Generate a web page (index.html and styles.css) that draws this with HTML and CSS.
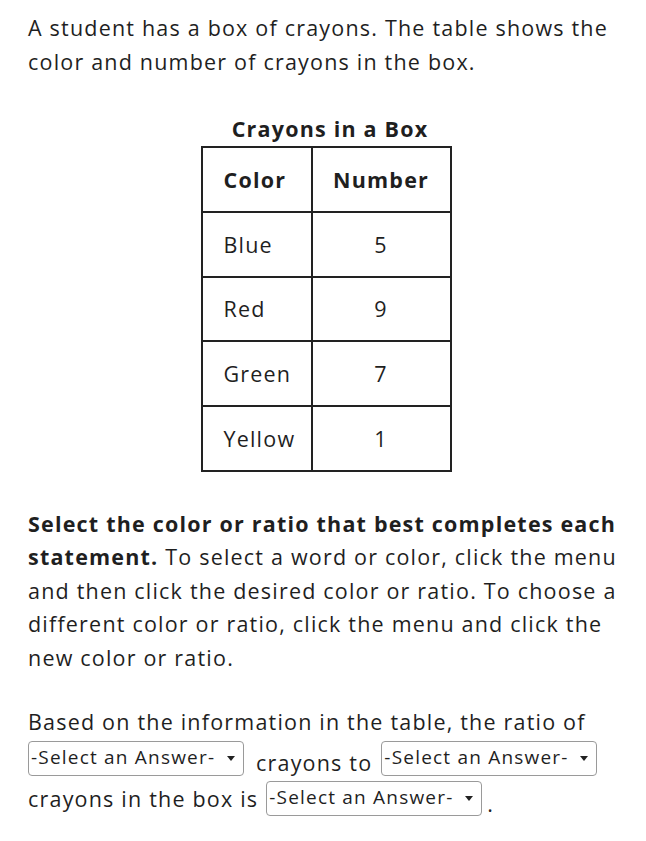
FILE: index.html
```html
<!DOCTYPE html>
<html>
<head>
<meta charset="utf-8">
<link rel="stylesheet" href="styles.css">
</head>
<body>
<div class="page">
  <p class="intro">A student has a box of crayons. The table shows the color and number of crayons in the box.</p>
  <div class="table-wrap">
    <div class="caption">Crayons in a Box</div>
    <table class="data">
      <thead>
        <tr><th class="c1">Color</th><th class="c2">Number</th></tr>
      </thead>
      <tbody>
        <tr><td class="c1">Blue</td><td class="c2">5</td></tr>
        <tr><td class="c1">Red</td><td class="c2">9</td></tr>
        <tr><td class="c1">Green</td><td class="c2">7</td></tr>
        <tr><td class="c1">Yellow</td><td class="c2">1</td></tr>
      </tbody>
    </table>
  </div>
  <p class="instr"><b>Select the color or ratio that best completes each statement.</b> To select a word or color, click the menu and then click the desired color or ratio. To choose a different color or ratio, click the menu and click the new color or ratio.</p>
  <div class="question">
    <div class="qline">Based on the information in the table, the ratio of</div>
    <div class="row row2">
      <span class="dd dd1"><span class="ddtext">-Select an Answer-</span><svg class="arrow" width="8" height="5" viewBox="0 0 8 5"><path d="M0 0H8L4 5Z" fill="#222"/></svg></span>
      <span class="word w2">crayons to</span>
      <span class="dd dd2"><span class="ddtext">-Select an Answer-</span><svg class="arrow" width="8" height="5" viewBox="0 0 8 5"><path d="M0 0H8L4 5Z" fill="#222"/></svg></span>
    </div>
    <div class="row row3">
      <span class="word w3">crayons in the box is</span>
      <span class="dd dd3"><span class="ddtext">-Select an Answer-</span><svg class="arrow" width="8" height="5" viewBox="0 0 8 5"><path d="M0 0H8L4 5Z" fill="#222"/></svg></span>
      <span class="word dot">.</span>
    </div>
  </div>
</div>
</body>
</html>
```
FILE: styles.css
```css
html, body {
  margin: 0;
  padding: 0;
  background: #fff;
}
body {
  font-family: "Open Sans", "DejaVu Sans", sans-serif;
  color: #1f1f1f;
  font-size: 21.5px;
  letter-spacing: 1.2px;
}
.page {
  padding: 11px 18px 0 28px;
  width: 600px;
}
p {
  margin: 0;
}
.intro {
  line-height: 34px;
}
.table-wrap {
  display: flex;
  flex-direction: column;
  align-items: center;
  margin-top: 37px;
}
.caption {
  font-weight: 700;
  line-height: 26px;
  margin-bottom: 4px;
  margin-left: 4px;
}
table.data {
  border-collapse: collapse;
  margin-left: -4px;
}
table.data th, table.data td {
  border: 2px solid #222;
  height: 62.8px;
  padding: 0;
  font-size: 21.5px;
}
table.data th {
  font-weight: 700;
}
table.data .c1 {
  width: 110px;
  text-align: left;
  padding-left: 21px;
  box-sizing: border-box;
}
table.data .c2 {
  width: 137px;
  text-align: center;
}
.instr {
  margin-top: 35px;
  line-height: 33.5px;
}
.instr b {
  font-weight: 700;
}
.question {
  margin-top: 31px;
}
.qline {
  line-height: 33px;
}
.row {
  display: flex;
  align-items: flex-start;
}
.row2 {
  margin-top: 3px;
}
.row3 {
  margin-top: 5px;
}
.word {
  line-height: 26px;
}
.w2 {
  margin-top: 9px;
  margin-left: 12px;
  margin-right: 9px;
}
.w3 {
  margin-top: 5px;
  margin-right: 8px;
}
.dot {
  margin-top: 10px;
  margin-left: 5px;
}
.dd {
  display: inline-flex;
  align-items: center;
  justify-content: space-between;
  box-sizing: border-box;
  width: 216px;
  height: 35px;
  border: 1.5px solid #9a9a9a;
  border-radius: 4px;
  padding: 0 8px 3px 2px;
  font-size: 19px;
  letter-spacing: 1.2px;
  color: #1f1f1f;
  background: #fff;
  flex: none;
}
.dd .arrow {
  margin-top: 3px;
  flex: none;
}
```
